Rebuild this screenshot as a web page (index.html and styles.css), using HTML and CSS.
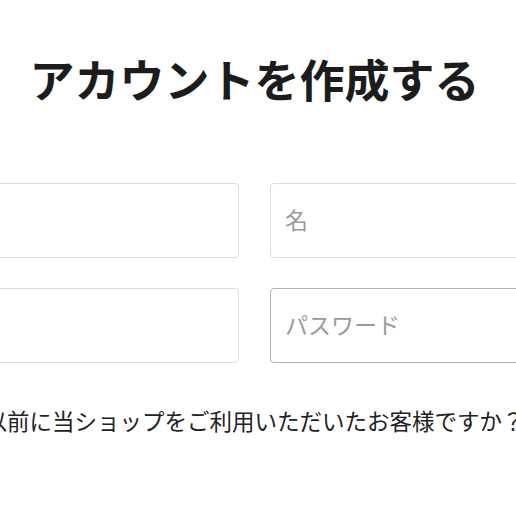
FILE: index.html
```html
<!DOCTYPE html>
<html lang="ja">
<head>
<meta charset="utf-8">
<link rel="stylesheet" href="styles.css">
</head>
<body>
<main class="page">
  <h1 class="title">アカウントを作成する</h1>
  <form class="form">
    <input class="field" type="text" placeholder="">
    <input class="field" type="text" placeholder="名">
    <input class="field" type="email" placeholder="">
    <input class="field field-focus" type="password" placeholder="パスワード">
  </form>
  <p class="note">以前に当ショップをご利用いただいたお客様ですか？</p>
</main>
</body>
</html>
```

FILE: styles.css
```css
html, body {
  margin: 0;
  padding: 0;
  background: #fff;
  overflow: hidden;
}
.page {
  display: flex;
  flex-direction: column;
  align-items: center;
  width: 516px;
  padding-right: 7px;
  box-sizing: border-box;
  font-family: "Noto Sans CJK JP", "Noto Sans", sans-serif;
  color: #222;
}
.title {
  margin: 49px 0 0;
  font-size: 45px;
  line-height: 60px;
  font-weight: 700;
  color: #1c1c1c;
  white-space: nowrap;
}
.form {
  display: grid;
  grid-template-columns: 330px 330px;
  column-gap: 31px;
  row-gap: 30px;
  margin-top: 74px;
  flex-shrink: 0;
}
.field {
  height: 75px;
  box-sizing: border-box;
  border: 1px solid #dcdcdc;
  border-radius: 4px;
  padding: 0 14px 3px;
  font-family: inherit;
  font-size: 23px;
  color: #333;
  background: #fff;
  outline: none;
}
.field::placeholder {
  color: #9a9a9a;
}
.field-focus {
  border-color: #b0b0b0;
}
.note {
  margin: 41px 0 0;
  font-size: 22.5px;
  line-height: 32px;
  white-space: nowrap;
  color: #222;
}
```
